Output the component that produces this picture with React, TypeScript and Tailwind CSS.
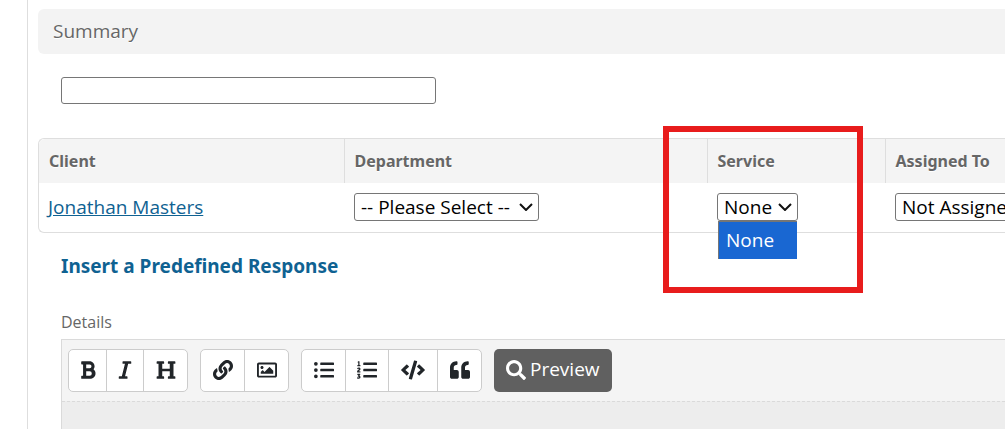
import type { ReactNode } from 'react';
import { FaBold, FaItalic, FaHeading, FaLink, FaRegImage, FaListUl, FaListOl, FaCode, FaQuoteLeft, FaSearch } from 'react-icons/fa';

const toolbarGroups = [
  [
    { label: 'Bold', icon: <FaBold />, width: 'w-[38px]' },
    { label: 'Italic', icon: <FaItalic />, width: 'w-[37px]' },
    { label: 'Heading', icon: <FaHeading />, width: 'w-[43px]' },
  ],
  [
    { label: 'Link', icon: <FaLink />, width: 'w-11' },
    { label: 'Image', icon: <FaRegImage />, width: 'w-[43px]' },
  ],
  [
    { label: 'Bulleted list', icon: <FaListUl />, width: 'w-11' },
    { label: 'Numbered list', icon: <FaListOl />, width: 'w-[43px]' },
    { label: 'Code', icon: <FaCode className="w-6" />, width: 'w-[49px]' },
    { label: 'Quote', icon: <FaQuoteLeft />, width: 'w-[43px]' },
  ],
];

function SelectBox({ label, width, children }: { label: string; width: string; children: ReactNode }) {
  return (
    <div className={`relative ${width}`}>
      <select
        aria-label={label}
        className="block h-7 w-full appearance-none rounded-[3px] border border-[#767676] bg-white pl-[6px] text-[19px] leading-6 text-black"
      >
        {children}
      </select>
      <svg viewBox="0 0 14 8" className="pointer-events-none absolute top-[10px] right-[6px] h-2 w-[14px]" fill="none" stroke="#111" strokeWidth="2">
        <path d="M1 1l6 6 6-6" />
      </svg>
    </div>
  );
}

export default function App() {
  const th = "border-l border-[#dedede] pl-[10px] text-left font-['Noto_Sans',sans-serif] text-base font-bold";

  return (
    <div className="overflow-hidden bg-white pl-[27px] font-['Open_Sans',sans-serif] text-[#666]">
      <main className="border-l border-[#dedede] pt-[9px] pl-[10px]">
        <h2 className="rounded-l-md bg-[#f3f3f3] px-[15px] pt-2 pb-[9px] text-[19px] leading-7 [text-shadow:0_1px_0_#fff]">
          Summary
        </h2>

        <div className="px-[23px] pt-[23px] pb-[34px]">
          <input
            type="text"
            aria-label="Summary"
            className="block h-[27px] w-[375px] rounded-[3px] border border-[#767676] bg-white px-1 text-base"
          />
        </div>

        {/* Ticket details */}
        <div className="rounded-l-md border border-r-0 border-[#dedede]">
          <table className="w-full table-fixed">
            <thead>
              <tr className="h-11 bg-[#f4f4f4] [text-shadow:0_1px_0_#fff]">
                <th className="w-[305px] rounded-tl-md pl-[10px] text-left font-['Noto_Sans',sans-serif] text-base font-bold">Client</th>
                <th className={`w-[363px] ${th}`}>Department</th>
                <th className={`relative w-[178px] ${th}`}>
                  Service
                  {/* Highlight around the service picker */}
                  <div className="pointer-events-none absolute -top-[13px] -left-[45px] z-10 h-[167px] w-[200px] border-6 border-[#e81c1c]" />
                </th>
                <th className={th}>Assigned To</th>
              </tr>
            </thead>
            <tbody>
              <tr className="h-[49px]">
                <td className="pl-[9px] text-[19px]">
                  <a href="#client" className="text-[#0f6292] underline">Jonathan Masters</a>
                </td>
                <td className="pb-[2px] pl-[10px]">
                  <SelectBox label="Department" width="w-[185px]">
                    <option>-- Please Select --</option>
                  </SelectBox>
                </td>
                <td className="pb-[2px] pl-[10px]">
                  <div className="relative">
                    <SelectBox label="Service" width="w-[81px]">
                      <option>None</option>
                    </SelectBox>
                    <ul className="absolute top-full left-px w-[79px] border-t border-l border-[#767676]">
                      <li className="bg-[#1967d2] pl-[7px] text-[19px] leading-[37px] text-white">None</li>
                    </ul>
                  </div>
                </td>
                <td className="pb-[2px] pl-[10px]">
                  <SelectBox label="Assigned To" width="w-[160px]">
                    <option>Not Assigned</option>
                  </SelectBox>
                </td>
              </tr>
            </tbody>
          </table>
        </div>

        <div className="pt-[19px] pl-[23px]">
          <a href="#responses" className="block font-['Noto_Sans',sans-serif] text-[19px] leading-7 font-bold text-[#0f6292]">
            Insert a Predefined Response
          </a>
          <label htmlFor="details" className="mt-[30px] block text-base leading-6">
            Details
          </label>

          <div className="mt-[5px] border border-r-0 border-b-0 border-[#dadada] bg-[#f4f4f4]">
            <div className="flex gap-3 px-[6px] py-[9px]">
              {toolbarGroups.map((group, i) => (
                <div key={i} className="flex divide-x divide-[#ccc] overflow-hidden rounded-[5px] border border-[#ccc] bg-white">
                  {group.map((item) => (
                    <button
                      key={item.label}
                      type="button"
                      aria-label={item.label}
                      className={`flex h-[41px] items-center justify-center pb-[2px] text-xl text-[#212529] ${item.width}`}
                    >
                      {item.icon}
                    </button>
                  ))}
                </div>
              ))}
              <button
                type="button"
                className="flex h-[43px] items-center gap-1 rounded-[5px] bg-[#606060] px-3 pb-[2px] text-[19px] font-medium text-white"
              >
                <FaSearch className="text-xl" />
                Preview
              </button>
            </div>
            <textarea
              id="details"
              className="block h-7 w-full resize-none border-t border-dashed border-[#dadada] bg-[#ededed] px-2 text-base"
            />
          </div>
        </div>
      </main>
    </div>
  );
}
